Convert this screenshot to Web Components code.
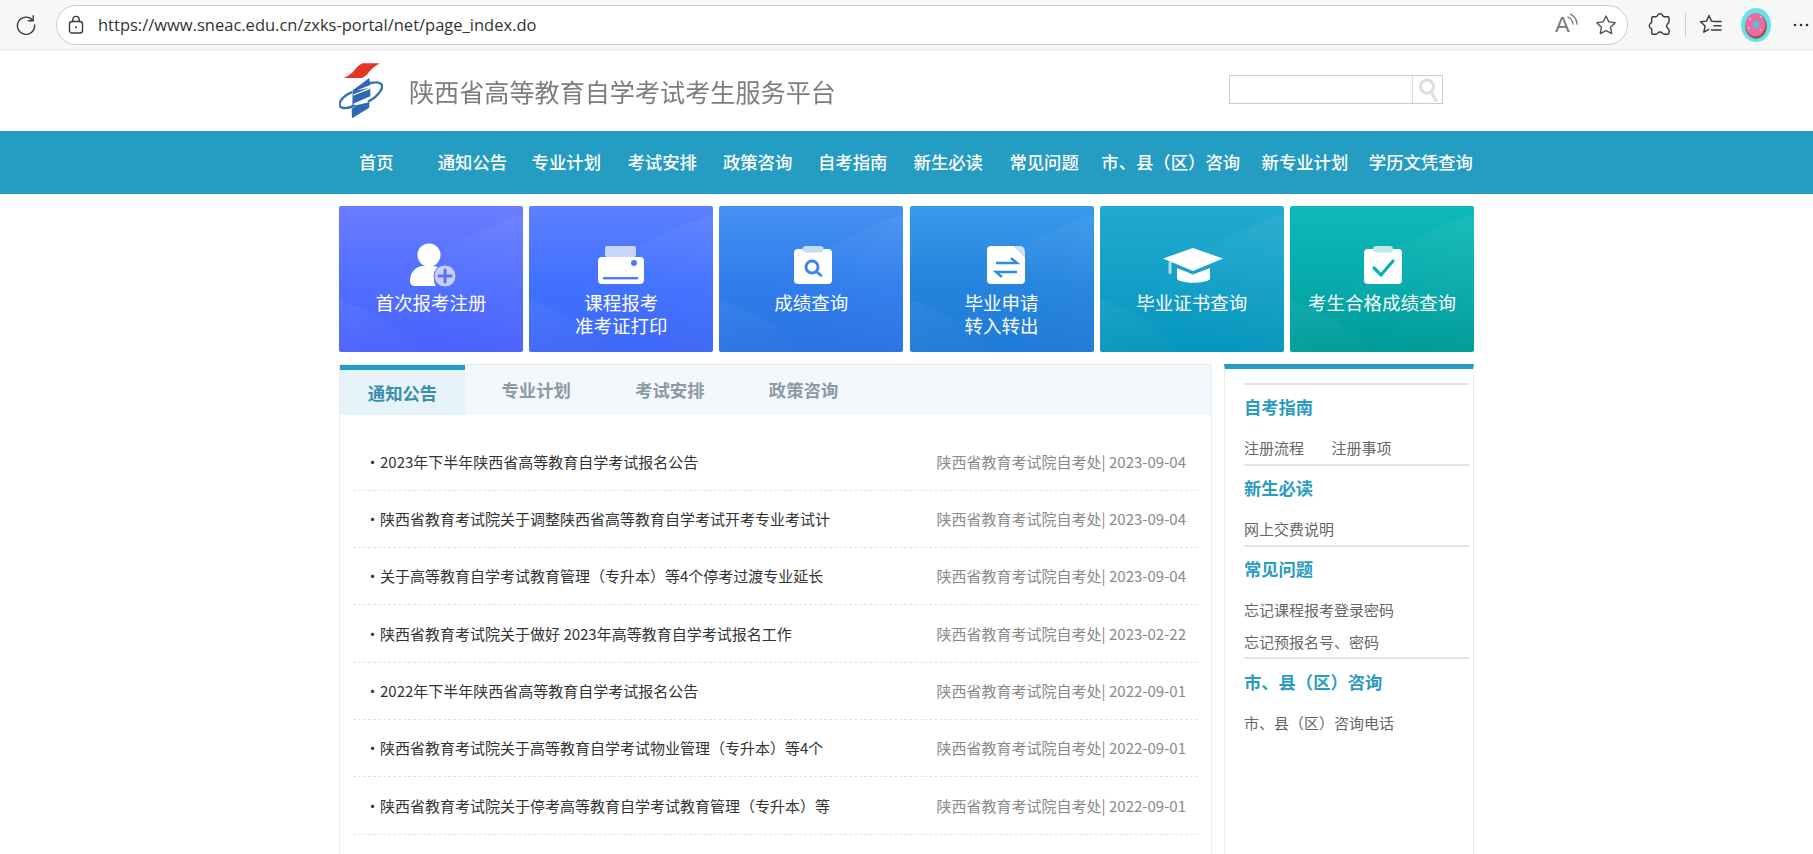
<!DOCTYPE html>
<html lang="zh"><head><meta charset="utf-8"><title>陕西省高等教育自学考试考生服务平台</title>
<style>
html,body{margin:0;padding:0;height:854px;overflow:hidden;background:#fff;font-family:"Noto Sans CJK SC","Noto Sans",sans-serif}
</style></head><body>
<x-browser-bar url="https://www.sneac.edu.cn/zxks-portal/net/page_index.do"></x-browser-bar>
<x-site-header>陕西省高等教育自学考试考生服务平台</x-site-header>
<x-nav-bar>
  <x-nav-link gap="20">首页</x-nav-link>
  <x-nav-link gap="44">通知公告</x-nav-link>
  <x-nav-link gap="24.5">专业计划</x-nav-link>
  <x-nav-link gap="26.5">考试安排</x-nav-link>
  <x-nav-link gap="26">政策咨询</x-nav-link>
  <x-nav-link gap="25.7">自考指南</x-nav-link>
  <x-nav-link gap="26.2">新生必读</x-nav-link>
  <x-nav-link gap="26.5">常见问题</x-nav-link>
  <x-nav-link gap="22.5">市、县（区）咨询</x-nav-link>
  <x-nav-link gap="21.5">新专业计划</x-nav-link>
  <x-nav-link gap="20.5">学历文凭查询</x-nav-link>
</x-nav-bar>
<x-page>
  <x-tiles>
    <x-tile from="#6a7cff" mid="#4f6eff" to="#4a62fb" accent="#5a70f8" icon="user" shift="4">首次报考注册</x-tile>
    <x-tile from="#5c80ff" mid="#4070ff" to="#3e68f6" accent="#5577fb" icon="printer">课程报考<br>准考证打印</x-tile>
    <x-tile from="#4690f2" mid="#2e7dec" to="#2b72e2" accent="#3c85ea" icon="search" shift="3">成绩查询</x-tile>
    <x-tile from="#389aeb" mid="#2383dd" to="#1f7bd8" accent="#2f8ce2" icon="swap" shift="8">毕业申请<br>转入转出</x-tile>
    <x-tile from="#21aacf" mid="#129fc7" to="#0596bd" accent="#1aa5ca" icon="cap" shift="2">毕业证书查询</x-tile>
    <x-tile from="#0fb9b9" mid="#06aaab" to="#009b98" accent="#0cb0af" icon="check" shift="2">考生合格成绩查询</x-tile>
  </x-tiles>
  <x-content>
    <x-news-panel>
      <x-news-row source="陕西省教育考试院自考处" date="2023-09-04">2023年下半年陕西省高等教育自学考试报名公告</x-news-row>
      <x-news-row source="陕西省教育考试院自考处" date="2023-09-04">陕西省教育考试院关于调整陕西省高等教育自学考试开考专业考试计</x-news-row>
      <x-news-row source="陕西省教育考试院自考处" date="2023-09-04">关于高等教育自学考试教育管理（专升本）等4个停考过渡专业延长</x-news-row>
      <x-news-row source="陕西省教育考试院自考处" date="2023-02-22">陕西省教育考试院关于做好 2023年高等教育自学考试报名工作</x-news-row>
      <x-news-row source="陕西省教育考试院自考处" date="2022-09-01">2022年下半年陕西省高等教育自学考试报名公告</x-news-row>
      <x-news-row source="陕西省教育考试院自考处" date="2022-09-01">陕西省教育考试院关于高等教育自学考试物业管理（专升本）等4个</x-news-row>
      <x-news-row source="陕西省教育考试院自考处" date="2022-09-01">陕西省教育考试院关于停考高等教育自学考试教育管理（专升本）等</x-news-row>
    </x-news-panel>
    <x-side-panel>
      <x-side-group title="自考指南"><span>注册流程</span><span>注册事项</span></x-side-group>
      <x-side-group title="新生必读"><span>网上交费说明</span></x-side-group>
      <x-side-group title="常见问题"><span>忘记课程报考登录密码</span><span class="br">忘记预报名号、密码</span></x-side-group>
      <x-side-group title="市、县（区）咨询" last><span>市、县（区）咨询电话</span></x-side-group>
    </x-side-panel>
  </x-content>
</x-page>
<script>
function def(name, css, html, setup){
  customElements.define(name, class extends HTMLElement{
    connectedCallback(){
      if(this.shadowRoot) return;
      const r=this.attachShadow({mode:'open'});
      const get=(k,d='')=>this.hasAttribute(k)?this.getAttribute(k):d;
      r.innerHTML='<style>'+css+'</style>'+(typeof html==='function'?html(get):html);
      if(setup) setup.call(this,r,get);
    }
  });
}
const ico='fill="none" stroke="#3a3a3a" stroke-width="1.4" stroke-linecap="round" stroke-linejoin="round"';
def('x-browser-bar',`
 :host{display:flex;align-items:center;height:49px;background:#f7f7f7;border-bottom:1px solid #e6e6e6;box-sizing:content-box;font-family:"Open Sans","Noto Sans",sans-serif}
 .reload{margin-left:15px;width:22px;height:22px;flex:none}
 .url{margin-left:19px;width:1572px;box-sizing:border-box;height:40px;border:1.5px solid #ccc;border-radius:20px;background:#fff;display:flex;align-items:center;padding-left:11px;flex:none}
 .url svg{flex:none}
 .txt{margin-left:14px;font-size:16.500px;color:#333;white-space:nowrap;margin-top:-1px}
 .sp{flex:1}
 .ra{position:relative;display:block;width:24px;margin-right:16px;font:22px/30px "Liberation Sans",sans-serif;color:#777}
 .ra svg{position:absolute;left:0;top:3px}
`,get=>`
 <svg class="reload" viewBox="0 0 22 22" ${ico}><path d="M17.6 6.2A8.6 8.6 0 1 0 19.6 11"/><path d="M18.2 1.8v4.9h-4.9"/></svg>
 <div class="url">
  <svg width="16" height="20" viewBox="0 0 16 20" ${ico}><rect x="1.5" y="6.5" width="13" height="11.5" rx="2.5"/><path d="M4.8 6.5V4.6a3.2 3.2 0 0 1 6.4 0v1.9"/><circle cx="8" cy="12.2" r="1" fill="#3a3a3a" stroke="none"/></svg>
  <span class="txt">${get('url')}</span><span class="sp"></span>
  <span class="ra">A<svg width="24" height="24" viewBox="0 0 24 24" fill="none" stroke="#777" stroke-width="1.3" stroke-linecap="round"><path d="M13 4a9 9 0 0 1 5 7"/><path d="M15.5 1.2a12 12 0 0 1 6.5 10"/></svg></span>
  <svg width="22" height="22" viewBox="0 0 22 22" style="margin-right:10px" fill="none" stroke="#555" stroke-width="1.4" stroke-linejoin="round"><path d="M11 2l2.8 5.900 6.400.9-4.600 4.500 1.100 6.400L11 16.700l-5.700 3 1.100-6.400L1.800 8.800l6.400-.9z"/></svg>
 </div>
 <svg width="24" height="26" viewBox="0 0 24 26" style="margin-left:20px;flex:none" ${ico} stroke-width="1.6"><path d="M9.500 3.500a2.800 2.800 0 0 1 5.200 0c.3 1 1 1.400 2 1.200l3 0c.7 0 1.300.6 1.300 1.300v4c0 .9-.8 1.200-1.400 1.800a3 3 0 0 0 0 4.400c.6.6 1.400.9 1.400 1.800v3c0 .7-.6 1.300-1.300 1.300h-3.600c-1 0-1.200-.8-1.800-1.400a3 3 0 0 0-4.400 0c-.6.6-.8 1.400-1.800 1.400H5c-.7 0-1.300-.6-1.300-1.300v-3.500c0-.9-.9-1-1.400-1.600a3 3 0 0 1 0-4.400c.5-.5 1.400-.7 1.400-1.600V6c0-.7.6-1.300 1.300-1.300h2.500c1 0 1.700-.2 2-1.200z"/></svg>
 <span style="margin-left:13px;width:1px;height:24px;background:#ccc;flex:none"></span>
 <svg width="24" height="24" viewBox="0 0 24 24" style="margin-left:13px;flex:none" ${ico}><path d="M14 8.300L12.500 8.100 10 2.500 7.500 8.100 1.500 8.700l4.600 4.200-1.300 6.300 5-2.800"/><path d="M15 8.500h7M15 12.700h7M12.500 17h9.500"/></svg>
 <svg width="30" height="34" viewBox="0 0 30 34" style="margin-left:18px;flex:none">
  <ellipse cx="15" cy="17" rx="15" ry="17" fill="#62e3ec"/>
  <ellipse cx="15" cy="18.200" rx="10.800" ry="12.500" fill="#9a5a3a"/>
  <ellipse cx="14.400" cy="16.600" rx="10" ry="11.600" fill="#ee6aa5"/>
  <ellipse cx="15" cy="16.400" rx="3.200" ry="3.600" fill="#4cc6d2"/>
  <g fill="#fff"><circle cx="9" cy="11" r=".7"/><circle cx="20" cy="9" r=".7"/><circle cx="8" cy="20" r=".7"/><circle cx="20" cy="22" r=".7"/></g>
  <g fill="#3aa7c8"><circle cx="13" cy="8" r=".7"/><circle cx="21" cy="15" r=".7"/><circle cx="12" cy="24" r=".7"/></g>
 </svg>
 <svg width="16" height="4" viewBox="0 0 16 4" style="margin-left:22px;flex:none" fill="#333"><circle cx="2" cy="2" r="1.3"/><circle cx="8" cy="2" r="1.3"/><circle cx="14" cy="2" r="1.3"/></svg>
`);
def('x-site-header',`
 :host{display:block;height:81px}
 .in{width:1135px;margin:0 auto;height:100%;display:flex;align-items:flex-start}
 svg.logo{margin-top:13px;flex:none}
 .t{margin:23px 0 0 26px;font-size:25.120px;line-height:37px;color:#7d7d7d;white-space:nowrap;filter:blur(.25px)}
 .sp{flex:1}
 .search{margin:25px 31px 0 0;display:flex;width:214px;height:29px;box-sizing:border-box;border:1.5px solid #ccc;background:#fff}
 .i{flex:1;border-right:1.5px solid #ddd}
 .b{width:29px;display:flex;align-items:center;justify-content:center}
`,`<div class="in">
 <svg class="logo" width="44" height="55" viewBox="28 40 130 165">
  <path d="M97 41h52c-12 8-22 14-32 26-6 8-12 15-22 18H40c12-4 24-12 34-24 7-9 14-16 23-20z" fill="#e53423"/>
  <path d="M122 100c30-7 41 5 30 23-9 14-24 26-36 32M64 128c-32 14-45 40-28 46 10 3 24 0 36-6" fill="none" stroke="#3471b6" stroke-width="7" stroke-linecap="round"/>
  <path d="M68 122l50-37 3 21-40 16 40-8v26l-56 30 53-12 0 16-52 32-1-29 12-8-10-2z" fill="#2f68ae"/>
  <path d="M70 136l50-20M70 164l50-22" stroke="#fff" stroke-width="4" fill="none"/>
 </svg>
 <div class="t"><slot></slot></div><span class="sp"></span>
 <div class="search"><span class="i"></span><span class="b"><svg width="22" height="26" viewBox="0 0 22 26" fill="none" stroke="#dddddd" stroke-width="3" stroke-linecap="round"><circle cx="10" cy="9.500" r="6.500"/><path d="M14 15l5 8.500"/></svg></span></div>
</div>`);
def('x-nav-bar',`
 :host{display:block;height:63px;background:#259cc1}
 .in{width:1135px;margin:0 auto;height:100%;display:flex;align-items:center;padding-bottom:2px;box-sizing:border-box}
`,`<div class="in"><slot></slot></div>`);
def('x-nav-link',`
 :host{display:block;flex:none;color:#fff;font-size:17.350px;font-weight:500;white-space:nowrap;line-height:24px}
`,`<slot></slot>`,function(r,get){this.style.marginLeft=get('gap','0')+'px';});
def('x-page',`:host{display:block;width:1135px;margin:12px auto 0}`,`<slot></slot>`);
def('x-tiles',`:host{display:grid;grid-template-columns:repeat(6,184px);justify-content:space-between;height:146px}`,`<slot></slot>`);
const tileIcons={
 user:a=>`<svg width="46" height="44" viewBox="0 0 46 44"><circle cx="19" cy="12" r="11.500" fill="#fff"/><path d="M0 38c0-9 6-15 14-15h9c3 0 5 1 7 2-6 3-8 12-4 18H5c-3 0-5-2-5-5z" fill="#fff"/><circle cx="35" cy="33" r="11" fill="#c7d0ff" stroke="${a}" stroke-width="1"/><path d="M35 27v12M29 33h12" stroke="${a}" stroke-width="3" stroke-linecap="round"/></svg>`,
 printer:a=>`<svg width="46" height="38" viewBox="0 0 46 38"><rect x="7" y="0" width="31" height="11" rx="2" fill="#c8d5ff"/><rect x="0" y="11" width="46" height="27" rx="4" fill="#fff"/><circle cx="36" cy="17" r="3" fill="${a}"/><rect x="5" y="31" width="35" height="2.400" fill="${a}"/></svg>`,
 search:a=>`<svg width="38" height="38" viewBox="0 0 38 38"><rect x="0" y="3" width="38" height="35" rx="4" fill="#fff"/><rect x="8.500" y="0" width="21" height="6.500" rx="3.200" fill="#c5dcf8"/><circle cx="18" cy="21" r="6" fill="none" stroke="${a}" stroke-width="3"/><path d="M23 26l4 3.500" stroke="${a}" stroke-width="2.600" stroke-linecap="round"/></svg>`,
 swap:a=>`<svg width="38" height="38" viewBox="0 0 38 38"><path d="M4 0h23l11 11v23a4 4 0 0 1-4 4H4a4 4 0 0 1-4-4V4a4 4 0 0 1 4-4z" fill="#fff"/><path d="M27 0l11 11c0-4 0-7-1-9-1-2-5-2-10-2z" fill="#cfe3f8"/><path d="M9 17h21l-6-5" fill="none" stroke="${a}" stroke-width="2.400"/><path d="M30 26H9l6 5" fill="none" stroke="${a}" stroke-width="2.400"/></svg>`,
 cap:a=>`<svg width="60" height="35" viewBox="0 0 60 35"><path d="M30 0l30 10.500L30 23 0 10.500z" fill="#fff"/><path d="M14 20l16 6.500 17-6.500v11c-5 5-28 5-33 0z" fill="#fff"/><rect x="5.500" y="13" width="3" height="13" rx="1.500" fill="#a9dfee"/></svg>`,
 check:a=>`<svg width="38" height="38" viewBox="0 0 38 38"><rect x="0" y="3" width="38" height="35" rx="4" fill="#fff"/><rect x="9" y="0" width="20" height="6.500" rx="3.200" fill="#bfe9e8"/><path d="M10 22l7 7 12-14" fill="none" stroke="${a}" stroke-width="3.200" stroke-linecap="round"/></svg>`
};
def('x-tile',`
 :host{display:block;position:relative;height:146px;border-radius:2px;overflow:hidden;color:#fff;text-align:center;font-size:18.500px;line-height:23px;box-sizing:border-box;padding-top:34px}
 .ic{height:50px;display:flex;align-items:center;justify-content:center;position:relative;box-sizing:border-box}
 .lb{position:relative;margin-top:.5px}
 svg.bg{position:absolute;left:0;top:0;width:100%;height:100%}
`,get=>`<svg class="bg" viewBox="0 0 184 146" preserveAspectRatio="none">
   <defs><linearGradient id="g" x1="1" y1="0" x2="0" y2="1"><stop offset="0" stop-color="#fff" stop-opacity=".055"/><stop offset=".7" stop-color="#fff" stop-opacity="0"/></linearGradient>
   <linearGradient id="h" x1="0" y1="0" x2="1" y2="1"><stop offset="0" stop-color="#fff" stop-opacity=".05"/><stop offset="1" stop-color="#fff" stop-opacity=".01"/></linearGradient></defs>
   <path d="M8 146C24 98 90 40 184 8V146Z" fill="url(#g)"/>
   <path d="M0 94C36 106 66 124 80 146H0Z" fill="url(#h)"/>
 </svg>
 <div class="ic" style="padding-left:${get('shift','0')}px">${tileIcons[get('icon')](get('accent'))}</div><div class="lb"><slot></slot></div>`,
 function(r,get){this.style.background=`linear-gradient(${get('from')},${get('mid')} 55%,${get('to')})`;});
def('x-content',`:host{display:flex;justify-content:space-between;align-items:flex-start;margin-top:12px}`,`<slot></slot>`);
def('x-news-panel',`
 :host{display:block;width:873px;height:490px;box-sizing:border-box;border:1px solid #e6edf0;border-bottom:0}
 .tabs{display:flex;gap:8.700px;height:50px;background:#f2f8fb}
 .tab{width:125px;text-align:center;font-size:17.350px;font-weight:700;color:#8c9ba3;line-height:50px}
 .tab.on{height:45px;border-top:5px solid #259cc1;background:#e6f3f9;color:#3a8dab;line-height:45px}
 .list{padding:18.500px 13px 0 13px}
`,`<div class="tabs"><div class="tab on">通知公告</div><div class="tab">专业计划</div><div class="tab">考试安排</div><div class="tab">政策咨询</div></div><div class="list"><slot></slot></div>`);
def('x-news-row',`
 :host{display:flex;justify-content:space-between;align-items:center;height:57.330px;box-sizing:border-box;border-bottom:1px dashed #e2e2e2;padding:0 12px 1px 12px;font-size:15px;white-space:nowrap}
 .t{color:#333}
 .m{color:#8a8a8a}
`,get=>`<span class="t">・<slot></slot></span><span class="m">${get('source')}| ${get('date')}</span>`);
def('x-side-panel',`
 :host{display:block;width:250px;height:490px;box-sizing:border-box;border:1px solid #e6edf0;border-top:5px solid #259cc1;border-bottom:0;padding:13.500px 4px 0 19px}
 .r{border-top:2px solid #e2e4e6}
`,`<div class="r"></div><slot></slot>`);
def('x-side-group',`
 :host{display:block;padding-top:7.500px;border-bottom:2px solid #e2e4e6}
 :host([last]){border-bottom:0}
 h3{margin:0 0 10px;font-size:17.300px;font-weight:700;line-height:30px;color:#2a9cc2}
 .items{font-size:15px;line-height:31.500px;color:#666}
 ::slotted(span){margin-right:27.500px;display:inline-block}
 ::slotted(.br){display:block}
`,get=>`<h3>${get('title')}</h3><div class="items"><slot></slot></div>`);
</script>
</body></html>
